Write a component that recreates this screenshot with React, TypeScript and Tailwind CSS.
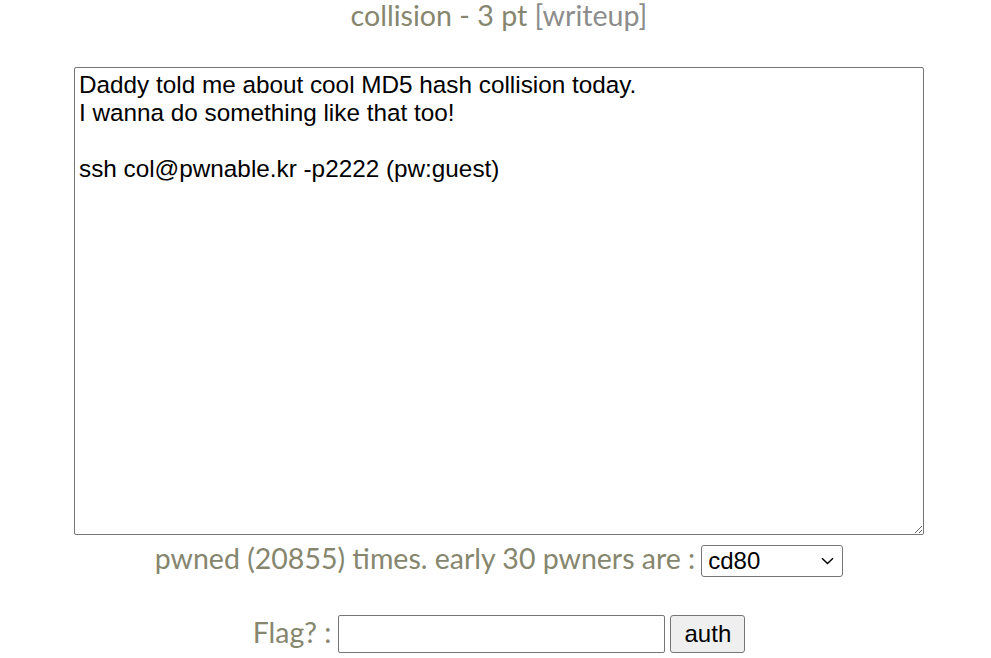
import React from "react";

export default function App() {
  return (
    <div className="w-[991px] h-[658px] overflow-hidden bg-white flex flex-col items-center pl-[7px]">
      <div className="text-[28.6px] leading-[30px] text-[#86866e] font-['Lato',sans-serif] whitespace-nowrap">
        collision - 3 pt <span className="text-[#8c8c8c]">[writeup]</span>
      </div>
      <textarea
        readOnly
        className="mt-[37px] w-[850px] h-[468px] box-border border border-[#767676] rounded-[2px] px-[4px] pt-[3px] text-[24.3px] leading-[28px] text-black font-['Liberation_Sans',Arial,sans-serif] resize outline-none"
        defaultValue={"Daddy told me about cool MD5 hash collision today.\nI wanna do something like that too!\n\nssh col@pwnable.kr -p2222 (pw:guest)\n"}
      />
      <div className="mt-[8px] flex items-center gap-[6px] font-['Lato',sans-serif] text-[28.5px] leading-[36px] text-[#86866e]">
        <span className="relative -top-[3px]">pwned (20855) times. early 30 pwners are :</span>
        <div className="relative w-[142px] h-[32px] border border-[#767676] rounded-[3px] bg-white flex items-center pl-[6px]">
          <span className="text-[24px] leading-[28px] text-black font-['Liberation_Sans',Arial,sans-serif]">cd80</span>
          <svg className="absolute right-[8px] top-[11px]" width="13" height="8" viewBox="0 0 13 8" fill="none">
            <path d="M1 1.2L6.5 6.5L12 1.2" stroke="#000" strokeWidth="1.5" />
          </svg>
        </div>
      </div>
      <div className="mt-[34px] flex items-center font-['Lato',sans-serif] text-[28.5px] text-[#86866e]">
        <span className="mr-[7px] relative -top-[2px]">Flag? :</span>
        <input className="w-[327px] h-[38px] border border-[#767676] rounded-[2px] outline-none" />
        <button className="ml-[5px] w-[75px] h-[38px] border border-[#767676] rounded-[3px] bg-[#efefef] text-[24px] text-black font-['Liberation_Sans',Arial,sans-serif]">
          auth
        </button>
      </div>
    </div>
  );
}
